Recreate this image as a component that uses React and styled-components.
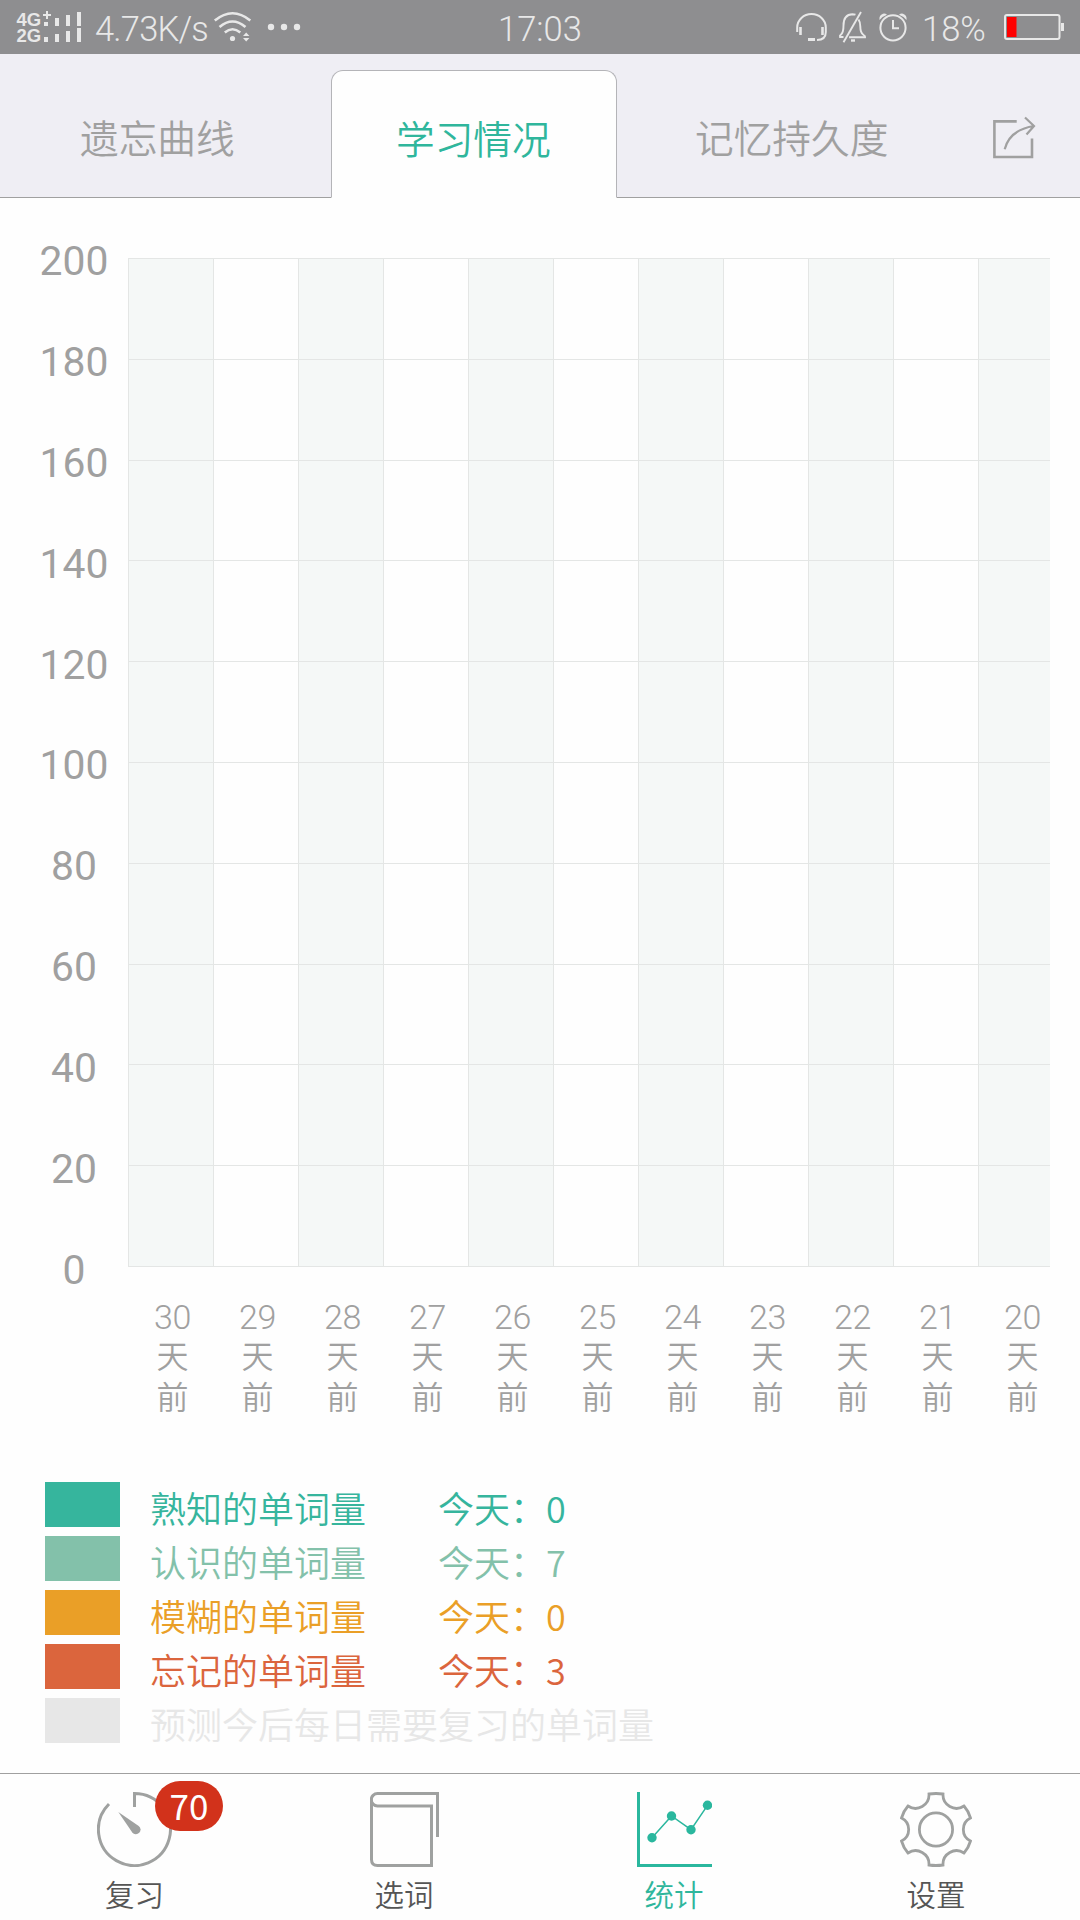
import React from "react";
import styled, { createGlobalStyle } from "styled-components";

const GlobalStyle = createGlobalStyle`
  * {
    box-sizing: border-box;
  }

  body {
    margin: 0;
    background: #fefefe;
    font-family: "Noto Sans CJK SC", sans-serif;
    font-weight: 350;
  }
`;

const Screen = styled.div`
  display: flex;
  flex-direction: column;
  width: 1080px;
  height: 1920px;
  overflow: hidden;
  white-space: nowrap;
`;

const StatusBar = styled.header`
  display: grid;
  grid-template-columns: 1fr auto 1fr;
  align-items: center;
  flex: none;
  height: 54px;
  padding: 0 16px;
  background: #8e8e90;
  color: #e8e8e8;

  svg {
    display: block;
    flex: none;
    overflow: visible;
  }
`;

const StatusGroup = styled.div`
  display: flex;
  align-items: center;
  justify-content: ${({ end }) => (end ? "flex-end" : "flex-start")};
  height: 54px;
`;

const StatusText = styled.span`
  width: ${({ width }) => width || "auto"};
  margin: ${({ gap }) => gap || "0"};
  padding-top: 3px;
  font-family: Roboto, "Noto Sans CJK SC", sans-serif;
  font-size: 34.5px;
  font-weight: 300;
  line-height: 46px;
  letter-spacing: ${({ spacing }) => spacing || "0"};
`;

const IconGap = styled.span`
  margin: ${({ gap }) => gap};
`;

const Tabs = styled.nav`
  display: grid;
  grid-template-columns: 331px 286px 1fr;
  flex: none;
  height: 144px;
  background: #efeef4;
`;

const Tab = styled.div`
  display: flex;
  align-items: center;
  margin-top: ${({ active }) => (active ? "16px" : "0")};
  padding: ${({ active }) => (active ? "5px 0 0 64px" : "21px 0 0")};
  padding-left: ${({ inset }) => inset};
  border: 1px solid ${({ active }) => (active ? "#b4b4b8" : "transparent")};
  border-bottom-color: ${({ active }) => (active ? "#fefefe" : "#a0a0a0")};
  border-width: ${({ active }) => (active ? "1px" : "0 0 1px")};
  border-radius: ${({ active }) => (active ? "12px 12px 0 0" : "0")};
  background: ${({ active }) => (active ? "#fefefe" : "none")};
  color: ${({ active }) => (active ? "#2fb69c" : "#a0a0a0")};
  font-size: 38.7px;
  line-height: 56px;

  svg {
    margin: 3px 0 0 104px;
  }
`;

const Chart = styled.section`
  display: grid;
  grid-template-columns: 128px 922px;
  grid-template-rows: 1009px 1fr;
  flex: none;
  height: 1224px;
  padding-top: 60px;
`;

const YAxis = styled.div`
  display: flex;
  flex-direction: column;
  justify-content: space-between;
  height: 1068px;
  margin-top: -26px;
  padding-left: 21px;
  color: #a0a0a0;
  font-family: Roboto, sans-serif;
  font-size: 40.8px;
  font-weight: 400;
  line-height: 59px;

  span {
    width: 106px;
    text-align: center;
  }
`;

const Plot = styled.div`
  display: flex;
  height: 1009px;
  border-top: 1px solid #e4e6e5;
  overflow: hidden;
`;

const Column = styled.div`
  display: grid;
  grid-template-rows: repeat(10, 1fr);
  flex: none;
  width: 85px;
  border-left: 1px solid #e4e6e5;
  background: ${({ shaded }) => (shaded ? "#f5f8f7" : "#fefefe")};
`;

const Cell = styled.div`
  border-bottom: 1px solid #e4e6e5;
`;

const XAxis = styled.div`
  display: flex;
  grid-column: 2;
  padding: 30px 0 0 2px;
`;

const DayLabel = styled.div`
  flex: none;
  width: 85px;
  color: #a0a0a0;
  font-size: 32px;
  line-height: 41px;
  text-align: center;

  span {
    display: block;
  }
`;

const DayNumber = styled.span`
  height: 37px;
  font-family: Roboto, sans-serif;
  font-size: 34px;
  font-weight: 300;
  letter-spacing: -0.4px;
`;

const Legend = styled.section`
  display: flex;
  flex-direction: column;
  gap: 9px;
  flex: none;
  height: 351px;
  padding: 60px 0 0 45px;
`;

const LegendRow = styled.div`
  display: flex;
  align-items: center;
  height: 45px;
  color: ${({ color }) => color};
  font-size: 36px;
  line-height: 45px;
`;

const Swatch = styled.span`
  width: 75px;
  height: 45px;
  margin-right: 30px;
  background: ${({ color }) => color};
`;

const LegendText = styled.span`
  padding-top: 5px;
`;

const Today = styled(LegendText)`
  margin-left: 72px;
`;

const BottomNav = styled.nav`
  display: grid;
  grid-template-columns: 269px 270px 270px 254px;
  flex: 1;
  border-top: 1px solid #a0a0a0;
`;

const NavItem = styled.div`
  display: flex;
  flex-direction: column;
  align-items: center;
  padding-top: 18px;
  color: ${({ active }) => (active ? "#2fb69c" : "#555")};
  font-size: 29.5px;
  line-height: 40px;

  svg {
    display: block;
    margin-bottom: 6px;
  }
`;

const IconWrap = styled.div`
  position: relative;
`;

const Badge = styled.span`
  position: absolute;
  top: -11px;
  left: 58px;
  width: 68px;
  height: 50px;
  border-radius: 25px;
  background: #d2321b;
  color: #fff;
  font-size: 35px;
  font-weight: 400;
  line-height: 48px;
  text-align: center;
`;

const tabs = [
  { name: "遗忘曲线", inset: "80px" },
  { name: "学习情况", inset: "64px", active: true },
  { name: "记忆持久度", inset: "78px", share: true },
];

const scale = [200, 180, 160, 140, 120, 100, 80, 60, 40, 20, 0];
const days = [30, 29, 28, 27, 26, 25, 24, 23, 22, 21, 20];

const legend = [
  { color: "#36b59d", label: "熟知的单词量", today: 0 },
  { color: "#83c1aa", label: "认识的单词量", today: 7 },
  { color: "#ea9f27", label: "模糊的单词量", today: 0 },
  { color: "#db653d", label: "忘记的单词量", today: 3 },
  { color: "#e7e7e7", label: "预测今后每日需要复习的单词量" },
];

const SignalIcon = () => (
  <svg width="66" height="34" viewBox="16 10 66 34" fill="currentColor">
    <text x="16.5" y="25.5" fontSize="18.5" fontWeight="700" fontFamily="Liberation Sans, sans-serif">4G</text>
    <text x="16.5" y="42" fontSize="18.5" fontWeight="700" fontFamily="Liberation Sans, sans-serif">2G</text>
    <path d="M43 14h3v-3h2v3h3v2h-3v3h-2v-3h-3z" />
    <path d="M44 22h4v4h-4zM55 18h4v8h-4zM66 15h4v11h-4zM77 12h4v14h-4z" />
    <path d="M44 37h4v5h-4zM55 34h4v8h-4zM66 31h4v11h-4zM77 28h4v14h-4z" />
  </svg>
);

const WifiIcon = () => (
  <svg width="38" height="30" viewBox="214 12 38 30" fill="none" stroke="currentColor" strokeWidth="2.6">
    <path d="M214.8 20.5Q232.5 6 250.3 20.5M219.5 27Q232.5 16 245.5 27M224.8 32.5Q232.5 26 240.3 32.5" />
    <circle cx="232.5" cy="38.5" r="2.6" fill="currentColor" stroke="none" />
    <path d="M243 36l3.2-3.5 3.2 3.5zM243 38l3.2 3.5 3.2-3.5z" fill="currentColor" stroke="none" />
  </svg>
);

const DotsIcon = () => (
  <svg width="34" height="8" viewBox="0 0 34 8" fill="currentColor">
    <circle cx="4" cy="4" r="3.2" />
    <circle cx="17" cy="4" r="3.2" />
    <circle cx="30" cy="4" r="3.2" />
  </svg>
);

const HeadsetIcon = () => (
  <svg width="32" height="32" viewBox="796 11 32 32" fill="none" stroke="currentColor" strokeWidth="2">
    <path d="M797.2 32v-4.5a14.3 13.5 0 0 1 28.6 0v4.5q0 8-8.8 8" />
    <path d="M800.5 27v8M822.5 27v8" strokeWidth="2.6" />
    <path d="M808 39.5h7" strokeWidth="3" />
  </svg>
);

const MutedBellIcon = () => (
  <svg width="30" height="34" viewBox="838 10.5 30 34" fill="none" stroke="currentColor" strokeWidth="1.9">
    <path d="M843.5 37.5h-3.5q-.5-1.5 1-2.5 2.5-2 2.5-9 0-11 9-11.2 1.6 0 3 .4M858.5 20q1.8 2.5 1.8 7 0 6.5 3.3 8.5 1.8 1 1.5 2.2h-16" />
    <path d="M861 12.5L843.5 42.8" />
    <path d="M851 41h4" strokeWidth="2.4" />
  </svg>
);

const ClockIcon = () => (
  <svg width="30" height="32" viewBox="878 11 30 32" fill="none" stroke="currentColor" strokeWidth="2">
    <circle cx="893" cy="27.8" r="12.6" />
    <path d="M893 20v8.2h6" />
    <path d="M879.5 20q-.7-5 3.5-6.3 2.2-.5 4 1-4.5 1.5-7.5 5.3zM906.5 20q.7-5-3.5-6.3-2.2-.5-4 1 4.5 1.5 7.5 5.3z" fill="currentColor" stroke="none" />
  </svg>
);

const BatteryIcon = () => (
  <svg width="60" height="28" viewBox="1004 13 60 28" fill="none">
    <rect x="1005" y="15" width="54.5" height="24" rx="2" stroke="currentColor" strokeWidth="2" />
    <rect x="1007" y="17" width="9.5" height="20" fill="#f00" />
    <rect x="1061" y="23" width="3" height="8" fill="currentColor" />
  </svg>
);

const ShareIcon = () => (
  <svg width="44" height="44" viewBox="992 116 44 44" fill="none" stroke="currentColor" strokeWidth="2.6">
    <path d="M1016.7 121.4H994.4V157H1032V138.5" />
    <path d="M1004.7 149.3Q1009.5 130 1034 126M1025 117.5L1034 126L1026.5 134.5" strokeWidth="2.2" />
  </svg>
);

const TimerIcon = () => (
  <svg width="75" height="75" viewBox="0 0 75 75" fill="none" stroke="#9fa1a0" strokeWidth="3">
    <path d="M37.5 15V1.5A36 36 0 1 1 12 12" />
    <path d="M21.3 20L41.7 33.9A4.6 4.6 0 1 1 35.3 40.4Z" fill="#9fa1a0" stroke="none" />
  </svg>
);

const BookIcon = () => (
  <svg width="69" height="75" viewBox="0 0 69 75" fill="none" stroke="#9fa1a0" strokeWidth="3">
    <path d="M67.5 45V1.5H7.5A6 6 0 0 0 7.5 14H61.5V73.5H7.5Q1.5 73.5 1.5 67.5V7.5" />
  </svg>
);

const StatsIcon = () => (
  <svg width="75" height="75" viewBox="0 0 75 75" fill="none" stroke="#2ab79e">
    <path d="M1.5 0V73.5H75" strokeWidth="3" />
    <path d="M15 45.7L34.5 24L54 37.7L70.5 13.3" strokeWidth="1.5" />
    <g fill="#2ab79e" stroke="none">
      <circle cx="15" cy="45.7" r="4.7" />
      <circle cx="34.5" cy="24" r="4.7" />
      <circle cx="54" cy="37.7" r="4.7" />
      <circle cx="70.5" cy="13.3" r="4.7" />
    </g>
  </svg>
);

const GearIcon = () => (
  <svg width="72" height="75" viewBox="0 0 72 75" fill="none" stroke="#9fa1a0" strokeWidth="2.8">
    <path d="M29 2Q36 1 43 2A13.5 13.5 0 0 0 64 14Q68.5 19 70.5 26A12.8 12.8 0 0 0 70.5 49Q68.5 56 64 61A13.5 13.5 0 0 0 43 73Q36 74 29 73A13.5 13.5 0 0 0 8 61Q3.5 56 1.5 49A12.8 12.8 0 0 0 1.5 26Q3.5 19 8 14A13.5 13.5 0 0 0 29 2Z" />
    <circle cx="36" cy="37.5" r="16.6" />
  </svg>
);

const navItems = [
  { label: "复习", Icon: TimerIcon, badge: 70 },
  { label: "选词", Icon: BookIcon },
  { label: "统计", Icon: StatsIcon, active: true },
  { label: "设置", Icon: GearIcon },
];

export default function App() {
  return (
    <Screen>
      <GlobalStyle />
      <StatusBar>
        <StatusGroup>
          <SignalIcon />
          <StatusText width="119px" gap="0 0 0 13px" spacing="-0.8px">
            4.73K/s
          </StatusText>
          <WifiIcon />
          <IconGap gap="0 0 0 15px">
            <DotsIcon />
          </IconGap>
        </StatusGroup>
        <StatusText>17:03</StatusText>
        <StatusGroup end>
          <HeadsetIcon />
          <IconGap gap="0 10px">
            <MutedBellIcon />
          </IconGap>
          <ClockIcon />
          <StatusText width="82px" gap="0 0 0 14px">
            18%
          </StatusText>
          <BatteryIcon />
        </StatusGroup>
      </StatusBar>

      <Tabs>
        {tabs.map(({ name, inset, active, share }) => (
          <Tab key={name} active={active} inset={inset}>
            {name}
            {share && <ShareIcon />}
          </Tab>
        ))}
      </Tabs>

      <Chart>
        <YAxis>
          {scale.map((value) => (
            <span key={value}>{value}</span>
          ))}
        </YAxis>
        <Plot>
          {days.map((day, i) => (
            <Column key={day} shaded={i % 2 === 0}>
              {scale.slice(1).map((value) => (
                <Cell key={value} />
              ))}
            </Column>
          ))}
        </Plot>
        <XAxis>
          {days.map((day) => (
            <DayLabel key={day}>
              <DayNumber>{day}</DayNumber>
              <span>天</span>
              <span>前</span>
            </DayLabel>
          ))}
        </XAxis>
      </Chart>

      <Legend>
        {legend.map(({ color, label, today }) => (
          <LegendRow key={label} color={color}>
            <Swatch color={color} />
            <LegendText>{label}</LegendText>
            {today !== undefined && <Today>今天：{today}</Today>}
          </LegendRow>
        ))}
      </Legend>

      <BottomNav>
        {navItems.map(({ label, Icon, badge, active }) => (
          <NavItem key={label} active={active}>
            <IconWrap>
              <Icon />
              {badge && <Badge>{badge}</Badge>}
            </IconWrap>
            {label}
          </NavItem>
        ))}
      </BottomNav>
    </Screen>
  );
}
